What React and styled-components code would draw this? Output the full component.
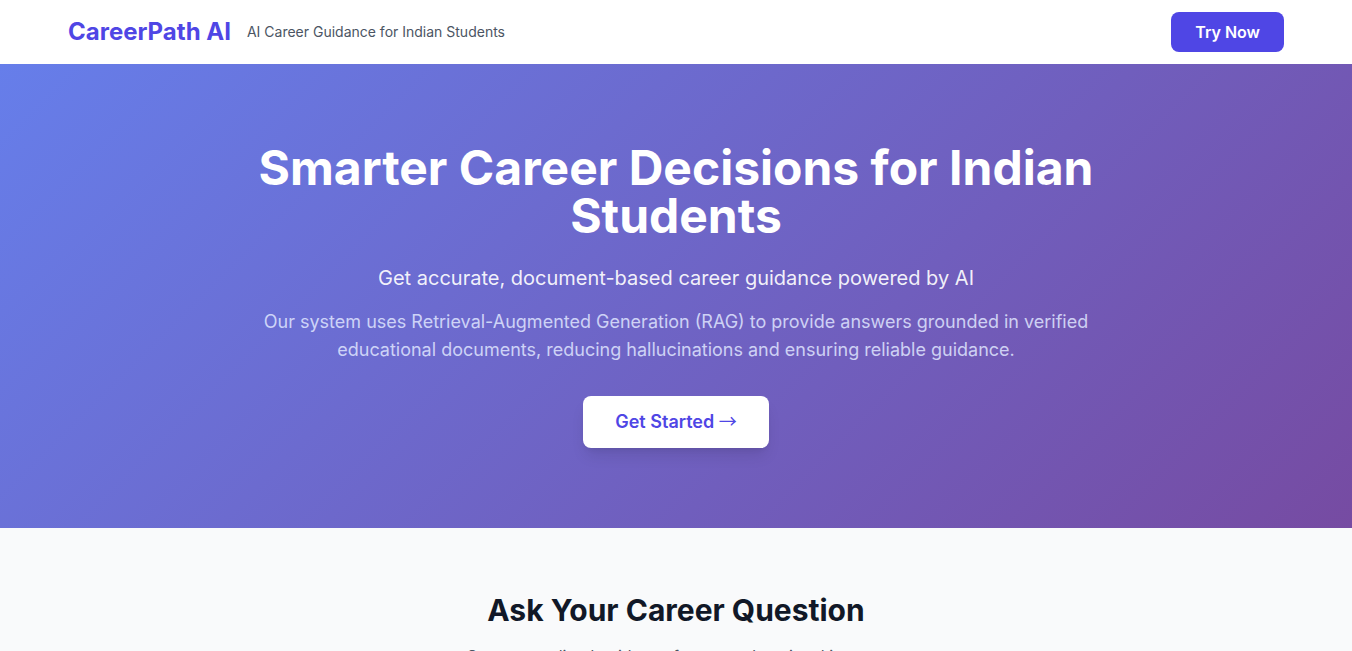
import React from "react";
import styled, { createGlobalStyle } from "styled-components";

const GlobalStyle = createGlobalStyle`
  * { box-sizing: border-box; }
  html, body { margin: 0; padding: 0; }
  body {
    font-family: Inter, "Noto Sans", "Liberation Sans", sans-serif;
    background: #f9fafb;
    color: #111827;
    -webkit-font-smoothing: antialiased;
  }
`;

const Header = styled.header`
  background: #ffffff;
  height: 64px;
`;

const Container = styled.div`
  max-width: 1280px;
  margin: 0 auto;
  padding: 0 32px;
  height: 100%;
`;

const NavBar = styled(Container)`
  display: flex;
  align-items: center;
  justify-content: space-between;
`;

const Brand = styled.div`
  display: flex;
  align-items: center;
  gap: 16px;
`;

const Logo = styled.h1`
  margin: 0;
  font-size: 24px;
  line-height: 32px;
  font-weight: 700;
  color: #4f46e5;
`;

const Tagline = styled.span`
  font-size: 14px;
  line-height: 20px;
  color: #4b5563;
`;

const PrimaryButton = styled.button`
  font-family: inherit;
  border: none;
  background: #4f46e5;
  color: #fff;
  font-size: 16px;
  font-weight: 600;
  line-height: 24px;
  padding: 8px 24px;
  border-radius: 8px;
  cursor: pointer;
`;

const Hero = styled.section`
  background: linear-gradient(135deg, #667eea 0%, #764ba2 100%);
  color: #fff;
  padding: 80px 32px;
  text-align: center;
`;

const HeroInner = styled.div`
  max-width: 896px;
  margin: 0 auto;
`;

const HeroTitle = styled.h2`
  margin: 0 0 24px;
  font-size: 48px;
  line-height: 48px;
  font-weight: 700;
`;

const HeroSub = styled.p`
  margin: 0 0 16px;
  font-size: 20px;
  line-height: 28px;
  color: rgba(255, 255, 255, 0.92);
`;

const HeroText = styled.p`
  margin: 0 0 32px;
  font-size: 18px;
  line-height: 28px;
  color: rgba(224, 231, 255, 0.85);
`;

const LightButton = styled.button`
  font-family: inherit;
  border: none;
  background: #fff;
  color: #4f46e5;
  font-size: 18px;
  font-weight: 600;
  line-height: 28px;
  height: 52px;
  padding: 12px 32px;
  border-radius: 8px;
  box-shadow: 0 10px 15px -3px rgba(0, 0, 0, 0.1), 0 4px 6px -4px rgba(0, 0, 0, 0.1);
  cursor: pointer;
`;

const Arrow = styled.span`
  font-family: "Noto Sans CJK JP", sans-serif;
  font-weight: 400;
  line-height: 0;
`;

const AskSection = styled.section`
  background: #f9fafb;
  padding: 64px 32px;
  text-align: center;
`;

const SectionTitle = styled.h2`
  margin: 0 0 16px;
  font-size: 30px;
  line-height: 36px;
  font-weight: 700;
  color: #111827;
`;

const SectionSub = styled.p`
  margin: 0;
  font-size: 16px;
  line-height: 24px;
  color: #4b5563;
`;

export default function App() {
  return (
    <>
      <GlobalStyle />
      <Header>
        <NavBar>
          <Brand>
            <Logo>CareerPath AI</Logo>
            <Tagline>AI Career Guidance for Indian Students</Tagline>
          </Brand>
          <PrimaryButton>Try Now</PrimaryButton>
        </NavBar>
      </Header>
      <Hero>
        <HeroInner>
          <HeroTitle>Smarter Career Decisions for Indian Students</HeroTitle>
          <HeroSub>Get accurate, document-based career guidance powered by AI</HeroSub>
          <HeroText>
            Our system uses Retrieval-Augmented Generation (RAG) to provide answers grounded in verified
            educational documents, reducing hallucinations and ensuring reliable guidance.
          </HeroText>
          <LightButton>
            Get Started <Arrow>→</Arrow>
          </LightButton>
        </HeroInner>
      </Hero>
      <AskSection>
        <SectionTitle>Ask Your Career Question</SectionTitle>
        <SectionSub>Get personalized guidance for your educational journey</SectionSub>
      </AskSection>
    </>
  );
}
